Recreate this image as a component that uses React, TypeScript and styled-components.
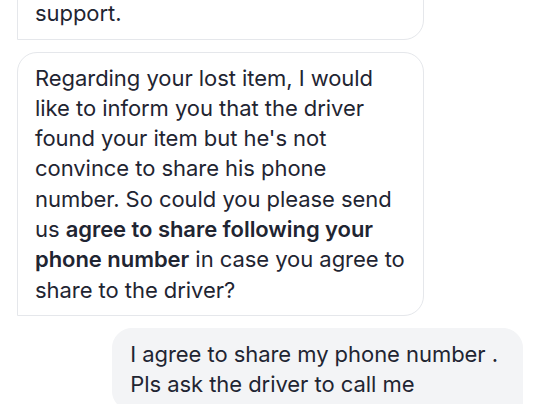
import React from "react";
import styled, { createGlobalStyle } from "styled-components";

const Global = createGlobalStyle`
  html, body { margin: 0; padding: 0; background: #ffffff; }
  body { font-family: Inter, "Noto Sans", "Liberation Sans", sans-serif; }
`;

const Viewport = styled.div`
  width: 540px;
  height: 404px;
  overflow: hidden;
  background: #ffffff;
`;

const Thread = styled.div`
  display: flex;
  flex-direction: column;
  gap: 12px;
  padding: 0 17px;
  margin-top: -43px;
`;

const Bubble = styled.div<{ $mine?: boolean }>`
  box-sizing: border-box;
  align-self: ${(p) => (p.$mine ? "flex-end" : "flex-start")};
  width: ${(p) => (p.$mine ? "auto" : "407px")};
  padding: ${(p) => (p.$mine ? "10px 24px 10px 17px" : "10px 17px")};
  border: 1px solid ${(p) => (p.$mine ? "#f3f4f6" : "#e5e7eb")};
  background: ${(p) => (p.$mine ? "#f3f4f6" : "#ffffff")};
  border-radius: ${(p) => (p.$mine ? "20px 20px 0 20px" : "20px 20px 20px 0")};
  color: #1f2532;
  font-size: 22px;
  line-height: 30.3px;
  letter-spacing: -0.05px;
`;

const Strong = styled.b`
  font-weight: 600;
`;

export default function App() {
  return (
    <Viewport>
      <Global />
      <Thread>
        <Bubble>
          Thank you for contacting our
          <br />
          support.
        </Bubble>
        <Bubble>
          Regarding your lost item, I would like to inform you that the driver
          found your item but he's not convince to share his phone number. So
          could you please send us{" "}
          <Strong>agree to share following your phone number</Strong> in case
          you agree to share to the driver?
        </Bubble>
        <Bubble $mine>
          I agree to share my phone number .
          <br />
          Pls ask the driver to call me
        </Bubble>
      </Thread>
    </Viewport>
  );
}
